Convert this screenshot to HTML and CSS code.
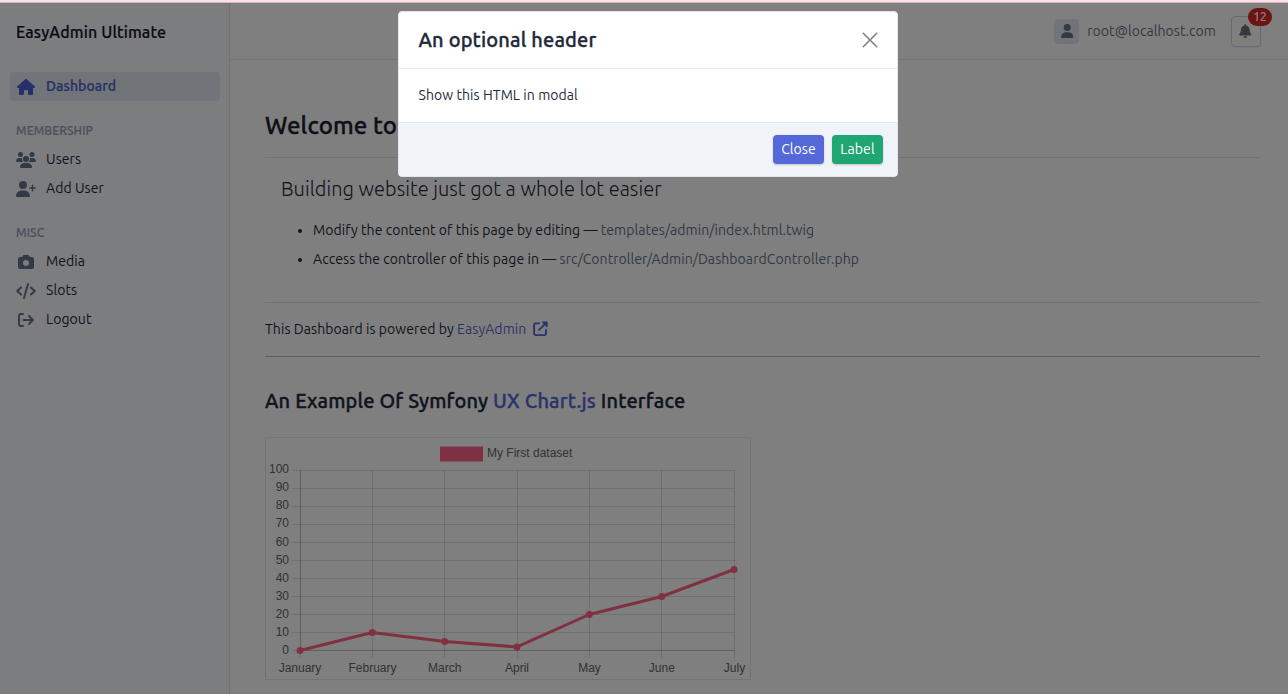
FILE: index.html
```html
<!DOCTYPE html>
<html lang="en">
<head>
<meta charset="utf-8">
<title>EasyAdmin Ultimate</title>
<link rel="stylesheet" href="styles.css">
</head>
<body>
<div class="progress"></div>
<div class="app">
  <aside class="sidebar">
    <div class="brand">EasyAdmin Ultimate</div>
    <nav class="menu">
      <a class="item active"><svg class="icon" viewBox="0 0 576 512" width="18" height="16"><path d="M575.8 255.5c0 18-15 32.1-32 32.1h-32l.7 160.2c0 2.7-.2 5.4-.5 8.1V472c0 22.1-17.9 40-40 40H392c-22.1 0-40-17.9-40-40V384c0-17.7-14.3-32-32-32H256c-17.7 0-32 14.3-32 32v88c0 22.1-17.9 40-40 40H104c-22.1 0-40-17.9-40-40V287.6H32c-18 0-32-14-32-32.1c0-9 3-17 10-24L266.4 8c7-7 15-8 22-8s15 2 21 7L564.8 231.5c8 7 12 15 11 24z"/></svg><span>Dashboard</span></a>
      <div class="group">MEMBERSHIP</div>
      <a class="item"><svg class="icon" viewBox="0 0 640 512" width="20" height="16"><path d="M144 0a80 80 0 1 1 0 160A80 80 0 1 1 144 0zM512 0a80 80 0 1 1 0 160A80 80 0 1 1 512 0zM0 298.7C0 239.8 47.8 192 106.7 192h42.7c15.9 0 31 3.5 44.6 9.7c-1.3 7.2-1.9 14.7-1.9 22.3c0 38.2 16.8 72.5 43.3 96H21.3C9.6 320 0 310.4 0 298.7zM405.3 320c26.6-23.5 43.3-57.8 43.3-96c0-7.6-.7-15-1.9-22.3c13.6-6.3 28.7-9.7 44.6-9.7h42.7C592.2 192 640 239.8 640 298.7c0 11.8-9.6 21.3-21.3 21.3H405.3zM224 224a96 96 0 1 1 192 0 96 96 0 1 1 -192 0zM128 485.3C128 411.7 187.7 352 261.3 352H378.7C452.3 352 512 411.7 512 485.3c0 14.7-11.9 26.7-26.7 26.7H154.7c-14.7 0-26.7-11.9-26.7-26.7z"/></svg><span>Users</span></a>
      <a class="item"><svg class="icon" viewBox="0 0 640 512" width="20" height="16"><path d="M96 128a128 128 0 1 1 256 0A128 128 0 1 1 96 128zM0 482.3C0 383.8 79.8 304 178.3 304h91.4C368.2 304 448 383.8 448 482.3c0 16.4-13.3 29.7-29.7 29.7H29.7C13.3 512 0 498.7 0 482.3zM504 312V248H440c-13.3 0-24-10.7-24-24s10.7-24 24-24h64V136c0-13.3 10.7-24 24-24s24 10.7 24 24v64h64c13.3 0 24 10.7 24 24s-10.7 24-24 24H552v64c0 13.3-10.7 24-24 24s-24-10.7-24-24z"/></svg><span>Add User</span></a>
      <div class="group">MISC</div>
      <a class="item"><svg class="icon" viewBox="0 0 512 512" width="16" height="16"><path d="M149.1 64.8L138.7 96H64C28.7 96 0 124.7 0 160V416c0 35.3 28.7 64 64 64H448c35.3 0 64-28.7 64-64V160c0-35.3-28.7-64-64-64H373.3L362.9 64.8C356.4 45.2 338.1 32 317.4 32H194.6c-20.7 0-39 13.2-45.5 32.8zM256 192a96 96 0 1 1 0 192 96 96 0 1 1 0-192z"/></svg><span>Media</span></a>
      <a class="item"><svg class="icon line" viewBox="0 0 640 512" width="20" height="16"><path d="M162 142L40 256l122 114M478 142l122 114-122 114M384 32L256 480"/></svg><span>Slots</span></a>
      <a class="item"><svg class="icon line" viewBox="0 0 512 512" width="16" height="16"><path d="M160 64H96a64 64 0 0 0-64 64v256a64 64 0 0 0 64 64h64M176 256h296M352 128l128 128-128 128"/></svg><span>Logout</span></a>
    </nav>
  </aside>
  <div class="main">
    <header class="topbar">
      <span class="avatar"><svg viewBox="0 0 448 512" width="12.5" height="14"><path d="M224 256A128 128 0 1 0 224 0a128 128 0 1 0 0 256zm-45.7 48C79.8 304 0 383.8 0 482.3C0 498.7 13.3 512 29.7 512H418.3c16.4 0 29.7-13.3 29.7-29.7C448 383.8 368.2 304 269.7 304H178.3z"/></svg></span>
      <span class="email">root@localhost.com</span>
      <span class="bell"><svg viewBox="0 0 448 512" width="12.5" height="14"><path d="M224 0c-17.700 0-32 14.300-32 32V51.200C119 66 64 130.600 64 208v18.800c0 47-17.300 92.400-48.500 127.600l-7.400 8.300c-8.400 9.400-10.400 22.900-5.300 34.400S19.400 416 32 416H416c12.600 0 24-7.400 29.200-18.900s3.100-25-5.300-34.400l-7.400-8.300C401.300 319.200 384 273.900 384 226.800V208c0-77.400-55-142-128-156.800V32c0-17.700-14.300-32-32-32zm45.300 493.300c12-12 18.700-28.300 18.700-45.300H160c0 17 6.700 33.300 18.700 45.300s28.300 18.700 45.300 18.700s33.300-6.700 45.300-18.700z"/></svg><b class="badge">12</b></span>
    </header>
    <main class="content">
      <h1>Welcome to EasyAdmin Ultimate</h1>
      <section class="intro">
        <p class="lead">Building website just got a whole lot easier</p>
        <ul>
          <li>Modify the content of this page by editing — <code>templates/admin/index.html.twig</code></li>
          <li>Access the controller of this page in — <code>src/Controller/Admin/DashboardController.php</code></li>
        </ul>
      </section>
      <p class="powered">This Dashboard is powered by <a>EasyAdmin</a><svg class="ext" viewBox="0 0 16 16" width="15" height="15"><path d="M6.500 2.500H3A1.700 1.700 0 0 0 1.200 4.200v9A1.700 1.700 0 0 0 3 15h9a1.700 1.700 0 0 0 1.800-1.800V9.500M6.500 9.500L13 3"/><path class="head" d="M9.800.4H15a.6.600 0 0 1 .6.600v5.200l-1 .4-5.200-5.200z"/></svg></p>
      <h2>An Example Of Symfony <a>UX Chart.js</a> Interface</h2>
      <div class="chart">
        <svg viewBox="265 437 486 243" width="486" height="243">
          <rect x="440" y="446.500" width="43" height="15" class="key"/>
          <text x="487" y="457">My First dataset</text>
          <path class="grid" d="M292 470.500H735M292 488.500H735M292 506.500H735M292 524.500H735M292 542.500H735M292 560.500H735M292 578.500H735M292 596.500H735M292 614.500H735M292 632.500H735M372.500 470V658M444.500 470V658M517.500 470V658M589.500 470V658M661.500 470V658M734.500 470V658M300.500 651V658M292 650.500H300"/>
          <path class="zero" d="M300.500 470V651M300 650.500H735"/>
          <g class="y"><text x="289" y="473">100</text><text x="289" y="491">90</text><text x="289" y="509">80</text><text x="289" y="527">70</text><text x="289" y="546">60</text><text x="289" y="564">50</text><text x="289" y="582">40</text><text x="289" y="600">30</text><text x="289" y="618">20</text><text x="289" y="636">10</text><text x="289" y="654">0</text></g>
          <g class="x"><text x="300" y="672">January</text><text x="372.500" y="672">February</text><text x="444.700" y="672">March</text><text x="517" y="672">April</text><text x="589.500" y="672">May</text><text x="661.800" y="672">June</text><text x="734.500" y="672">July</text></g>
          <path class="series" d="M300 650.500L372.300 632.500L444.700 641.500L517 646.900L589.300 614.500L661.700 596.500L734 569.500"/>
          <g class="dots"><circle cx="300" cy="650.500" r="3.500"/><circle cx="372.300" cy="632.500" r="3.500"/><circle cx="444.700" cy="641.500" r="3.500"/><circle cx="517" cy="646.900" r="3.500"/><circle cx="589.300" cy="614.500" r="3.500"/><circle cx="661.700" cy="596.500" r="3.500"/><circle cx="734" cy="569.500" r="3.500"/></g>
        </svg>
      </div>
    </main>
  </div>
</div>
<div class="backdrop">
  <div class="modal">
    <div class="modal-head"><h3>An optional header</h3><svg viewBox="0 0 16 16" width="16" height="16"><path d="M1.300 1.300L14.700 14.700M14.700 1.300L1.300 14.700"/></svg></div>
    <div class="modal-body">Show this HTML in modal</div>
    <div class="modal-foot"><button class="btn">Close</button><button class="btn ok">Label</button></div>
  </div>
</div>
</body>
</html>
```
FILE: styles.css
```css
* { box-sizing: border-box; }
body { margin: 0; height: 694px; overflow: hidden; background: #fff; color: #1e293b; font: 14px/21px "Ubuntu", "Noto Sans", sans-serif; letter-spacing: .07px; }
h1, h2, h3, p, ul { margin: 0; padding: 0; }
h1, h2, h3 { -webkit-text-stroke: .35px; }
a { color: #5468d8; }
.progress { height: 3px; background: #ffe0e6; border-bottom: 1px solid #d8b4bc; }
.app { display: flex; height: 691px; }

.sidebar { width: 230px; background: #f8fafc; border-right: 1px solid #e2e5ea; padding: 16px 9px 0 10px; }
.brand { padding-left: 6px; height: 53px; line-height: 27px; font-size: 16px; font-weight: 500; letter-spacing: .13px; -webkit-text-stroke: .2px; color: #0f172a; }
.item { display: flex; align-items: center; gap: 10px; height: 29px; padding-left: 6px; border-radius: 4px; color: #1e293b; }
.item.active { background: #e2e8f0; color: #4f5ed1; }
.item.active span { font-weight: 500; -webkit-text-stroke: .2px; }
.item .icon { width: 20px; flex: none; fill: #64748b; margin-top: 1px; }
.item.active .icon { fill: #4f5ed1; }
.item .icon.line { fill: none; stroke: #64748b; stroke-width: 62; stroke-linecap: round; stroke-linejoin: round; }
.group { height: 44px; padding: 15px 0 0 6px; line-height: 30px; font-size: 12px; font-weight: 500; color: #94a3b8; letter-spacing: .1px; -webkit-text-stroke: .15px; }

.main { flex: 1; display: flex; flex-direction: column; }
.topbar { height: 57px; flex: none; border-bottom: 1px solid #e5e7eb; display: flex; align-items: center; justify-content: flex-end; padding-right: 27px; color: #64748b; }
.avatar { width: 25px; height: 25px; border-radius: 4px; background: #e2e8f0; display: grid; place-items: center; fill: #64748b; margin-right: 8px; }
.email { margin-right: 15px; line-height: 20px; margin-top: -1px; letter-spacing: .06px; }
.bell { position: relative; width: 30px; height: 31px; margin-top: 1px; border: 1px solid #cbd5e1; border-radius: 4px; display: grid; place-items: center; fill: #6b7280; box-shadow: 0 1px 2px rgba(0,0,0,.06); }
.bell svg { margin: -2px 0 0 -1px; }
.badge { position: absolute; left: 16px; top: -9px; width: 24px; height: 18px; border-radius: 9px; background: #dc2626; color: #fff; font-size: 12px; line-height: 17px; font-weight: 500; text-align: center; }

.content { padding: 48px 28px 0 35px; }
h1 { height: 49px; line-height: 36px; font-size: 24px; font-weight: 500; letter-spacing: .1px; color: #1a202c; white-space: nowrap; }
.intro { height: 146px; border: solid #e5e5e5; border-width: 1px 0; padding: 16px 16px 0; }
.lead { font-size: 20px; font-weight: 300; line-height: 30px; margin-bottom: 12px; letter-spacing: .04px; }
ul { padding-left: 32px; line-height: 29px; }
code { font-family: inherit; font-size: 14px; color: #64748b; }
.powered { height: 54px; line-height: 51px; border-bottom: 1px solid #bbb; display: flex; align-items: center; white-space: pre; }
.powered a { margin-right: 7px; }
.ext { fill: none; stroke: #5468d8; stroke-width: 2; stroke-linecap: round; margin-top: -2px; }
.ext .head { fill: #5468d8; stroke: none; }
h2 { padding-top: 28px; height: 80px; line-height: 32px; font-size: 20px; font-weight: 500; letter-spacing: .16px; }
.chart { width: 486px; height: 243px; border: 1px solid #e2e8f0; letter-spacing: 0; }
.chart svg { display: block; margin: -1px; }
.chart text { font: 12px "Liberation Sans", Arial, sans-serif; fill: #666; }
.y text { text-anchor: end; }
.x text { text-anchor: middle; }
.grid, .zero { fill: none; stroke: rgba(0,0,0,.12); }
.zero { stroke: rgba(0,0,0,.25); }
.series { fill: none; stroke: #ff6384; stroke-width: 3; stroke-linejoin: round; }
.dots, .key { fill: #ff6384; }

.backdrop { position: absolute; inset: 3px 0 0; background: rgba(0,0,0,.5); padding-top: 8px; }
.modal { width: 500px; height: 166px; margin: 0 auto; transform: translateX(4px); background: #fff; border: 1px solid #e2e8f0; border-radius: 4px; overflow: hidden; }
.modal-head { height: 57px; border-bottom: 1px solid #e2e8f0; display: flex; align-items: center; justify-content: space-between; padding: 0 19px 0 19.5px; }
.modal-head h3 { font-size: 20px; font-weight: 500; letter-spacing: .16px; margin-top: -2px; }
.modal-head svg { stroke: #7f7f7f; stroke-width: 1.6; stroke-linecap: round; }
.modal-body { height: 54px; line-height: 53px; padding-left: 19.5px; letter-spacing: .07px; border-bottom: 1px solid #e2e8f0; }
.modal-foot { height: 54px; background: #f0f4f8; display: flex; justify-content: flex-end; gap: 8px; padding: 12px 14px 0 0; }
.btn { width: 51px; height: 29px; border: 0; border-radius: 4px; padding: 0 0 1px; background: #5468d8; color: #fff; font: 14px "Ubuntu", "Noto Sans", sans-serif; letter-spacing: .1px; box-shadow: 0 1px 2px rgba(0,0,0,.2); }
.btn.ok { background: #1fa672; }
```
